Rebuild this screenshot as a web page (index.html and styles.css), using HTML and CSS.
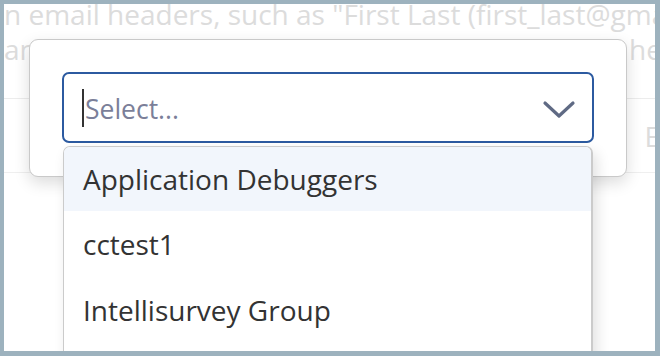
FILE: index.html
```html
<!DOCTYPE html>
<html>
<head>
<meta charset="utf-8">
<link rel="stylesheet" href="styles.css">
</head>
<body>
<div class="frame">
  <div class="page">
    <p class="bg-line">n email headers, such as "First Last (first_last@gmail.com)"</p>
    <div class="bg-row2"><span>an</span><span class="right">he</span></div>
    <div class="bg-sep"></div>
    <div class="bg-row3"><span class="right">E</span></div>
    <div class="bg-sep2"></div>
  </div>
  <div class="modal">
    <div class="select">
      <span class="caret"></span>
      <span class="placeholder">Select...</span>
      <svg class="chev" width="34" height="20" viewBox="0 0 34 20"><path d="M3 3 L17 16 L31 3" fill="none" stroke="#5f6a84" stroke-width="3.2" stroke-linecap="round" stroke-linejoin="round"/></svg>
    </div>
    <div class="menu">
      <div class="opt active">Application Debuggers</div>
      <div class="opt">cctest1</div>
      <div class="opt">Intellisurvey Group</div>
      <div class="opt">More</div>
    </div>
  </div>
</div>
</body>
</html>
```
FILE: styles.css
```css
html, body { margin: 0; padding: 0; }
body { width: 660px; height: 356px; overflow: hidden; font-family: "Open Sans", "Liberation Sans", sans-serif; }
.frame {
  position: relative;
  box-sizing: border-box;
  width: 660px; height: 356px;
  border-style: solid;
  border-color: #9db2be;
  border-width: 4px 5px 5px 4px;
  background: #fff;
  overflow: hidden;
}
.page { color: #dcdcdc; font-size: 28px; line-height: 35px; }
.bg-line { margin: -7px 0 0 0; white-space: nowrap; height: 35px; }
.bg-row2 { display: flex; justify-content: space-between; height: 35px; }
.bg-row2 .right { margin-right: -7px; }
.bg-sep { height: 1px; background: #ececec; margin-top: 31px; }
.bg-row3 { display: flex; justify-content: flex-end; height: 35px; margin-top: 20px; }
.bg-row3 .right { margin-right: -5px; }
.bg-sep2 { height: 1px; background: #efefef; margin-top: 18px; }
.modal {
  position: absolute;
  left: 25px; top: 35px;
  width: 598px; height: 138px;
  box-sizing: border-box;
  border: 1px solid #c9c9c9;
  border-radius: 9px;
  background: #fff;
  box-shadow: 0 6px 16px rgba(0,0,0,0.14);
  padding: 32px 32px;
}
.select {
  box-sizing: border-box;
  height: 71px;
  border: 2px solid #2c5aa0;
  border-radius: 7px;
  display: flex;
  align-items: center;
  padding-left: 18px;
  padding-right: 16px;
}
.caret { width: 2px; height: 38px; background: #333; }
.placeholder { color: #7b7f99; font-size: 26.5px; flex: 1; margin-left: 1px; margin-top: 2px; }
.chev { display: block; margin-top: 4px; }
.menu {
  position: absolute;
  left: 33px; top: 106px;
  width: 530px;
  box-sizing: border-box;
  background: #fff;
  border: 1px solid #cbcbcb;
  border-right-width: 2px;
  border-radius: 7px;
  box-shadow: 4px 6px 14px rgba(0,0,0,0.12);
  overflow: hidden;
}
.opt {
  height: 66px;
  display: flex;
  align-items: center;
  padding-left: 19px;
  font-size: 28px;
  color: #333;
}
.opt.active { background: #f2f6fc; height: 64px; }
```
